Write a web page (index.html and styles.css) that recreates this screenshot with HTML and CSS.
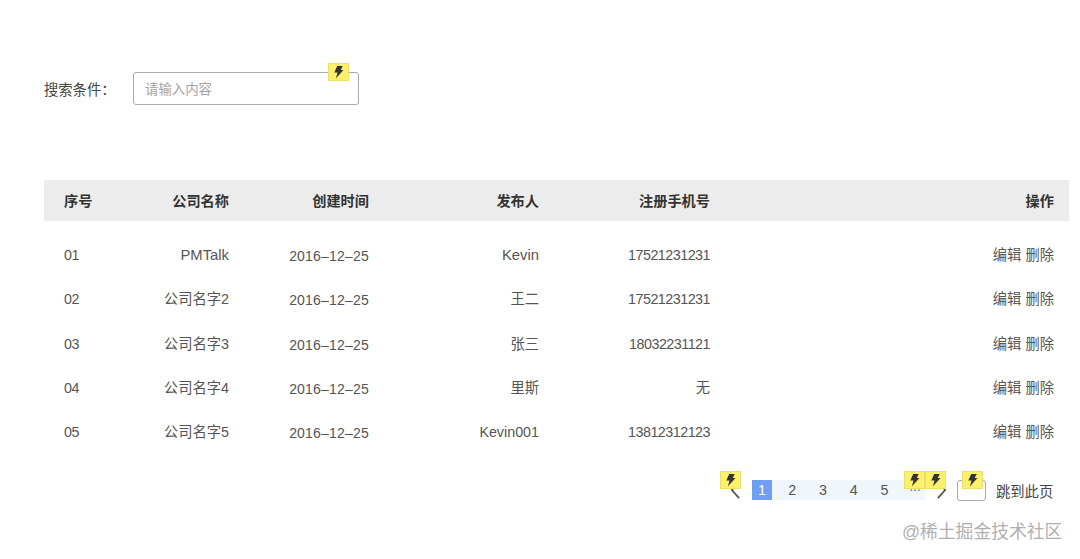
FILE: index.html
```html
<!DOCTYPE html>
<html lang="zh-CN">
<head>
<meta charset="utf-8">
<title>列表</title>
<link rel="stylesheet" href="styles.css">
</head>
<body>
<svg class="defs" width="0" height="0"><symbol id="bolt" viewBox="0 0 12 14"><path d="M4.6 0.5h6L8.4 4.8H11.5L3.2 13.7l1.7-6.2H1.4z"/></symbol></svg>
<main class="page">
  <section class="search">
    <label class="search-label">搜索条件：</label>
    <div class="search-box">
      <span class="placeholder">请输入内容</span>
      <span class="badge badge-input"><svg><use href="#bolt"/></svg></span>
    </div>
  </section>
  <section class="table">
    <div class="row head">
      <span class="left">序号</span><span>公司名称</span><span>创建时间</span><span>发布人</span><span>注册手机号</span><span>操作</span>
    </div>
    <div class="body">
      <div class="row"><span class="left num">01</span><span class="latin">PMTalk</span><span class="date">2016–12–25</span><span class="latin">Kevin</span><span class="num">17521231231</span><span>编辑 删除</span></div>
      <div class="row"><span class="left num">02</span><span>公司名字2</span><span class="date">2016–12–25</span><span>王二</span><span class="num">17521231231</span><span>编辑 删除</span></div>
      <div class="row"><span class="left num">03</span><span>公司名字3</span><span class="date">2016–12–25</span><span>张三</span><span class="num">18032231121</span><span>编辑 删除</span></div>
      <div class="row"><span class="left num">04</span><span>公司名字4</span><span class="date">2016–12–25</span><span>里斯</span><span>无</span><span>编辑 删除</span></div>
      <div class="row"><span class="left num">05</span><span>公司名字5</span><span class="date">2016–12–25</span><span>Kevin001</span><span class="num">13812312123</span><span>编辑 删除</span></div>
    </div>
  </section>
  <nav class="pager">
    <span class="arrow">
      <svg class="chev" viewBox="0 0 12 20"><path d="M10 1L2 10l8 9"/></svg>
      <span class="badge badge-prev"><svg><use href="#bolt"/></svg></span>
    </span>
    <div class="pages">
      <span class="page-no current">1</span><span class="page-no">2</span><span class="page-no">3</span><span class="page-no">4</span><span class="page-no">5</span><span class="page-no dots">...</span>
      <span class="badge badge-dots"><svg><use href="#bolt"/></svg></span>
    </div>
    <span class="arrow next">
      <svg class="chev" viewBox="0 0 12 20"><path d="M2 1l8 9-8 9"/></svg>
      <span class="badge badge-next"><svg><use href="#bolt"/></svg></span>
    </span>
    <span class="jump-box"><span class="badge badge-jump"><svg><use href="#bolt"/></svg></span></span>
    <span class="jump-text">跳到此页</span>
  </nav>
</main>
<div class="watermark">@稀土掘金技术社区</div>
</body>
</html>
```
FILE: styles.css
```css
* { box-sizing: border-box; }
html, body { margin: 0; padding: 0; }
body {
  width: 1080px;
  height: 559px;
  overflow: hidden;
  position: relative;
  background: #fff;
  color: #555;
  font-family: "Liberation Sans", "Noto Sans CJK SC", sans-serif;
  font-size: 14.3px;
}
.defs { position: absolute; }
.page { padding: 72px 0 0 44px; }
.search { display: flex; align-items: center; height: 33px; }
.search-label { width: 89px; color: #444; position: relative; top: -0.5px; }
.search-box {
  position: relative;
  width: 226px;
  height: 33px;
  padding: 5px 0 0 11px;
  border: 1px solid #aaa;
  border-radius: 3px;
}
.placeholder { color: #a3a3a3; font-size: 13.4px; }
.badge {
  position: absolute;
  display: flex;
  align-items: center;
  justify-content: center;
  width: 21px;
  height: 18px;
  background: #fdf06a;
  border: 1px solid #eadf6e;
}
.badge svg { width: 11px; height: 14px; fill: #333; }
.badge-input { top: -10px; right: 9px; }
.table { width: 1025px; margin-top: 75px; }
.row {
  display: grid;
  grid-template-columns: 65px 100px 140px 170px 171px 1fr;
  align-items: center;
  height: 44.3px;
  padding: 0 15px 0 20px;
  text-align: right;
  line-height: 20px;
}
.left { text-align: left; }
.head {
  height: 41px;
  background: #ececec;
  color: #333;
  font-weight: 700;
  font-size: 14.2px;
}
.body { padding-top: 12px; }
.num { font-size: 14.3px; letter-spacing: -0.5px; }
.latin { font-size: 14.8px; }
.date { position: relative; top: 1px; font-size: 14px; letter-spacing: 0.2px; }
.pager {
  display: flex;
  align-items: center;
  height: 20px;
  margin-top: 26px;
  padding-left: 686px;
}
.arrow { position: relative; display: flex; width: 22px; height: 20px; align-items: center; justify-content: flex-start; }
.chev { width: 11px; height: 18px; fill: none; stroke: #555; stroke-width: 2; }
.badge-prev { top: -9px; left: -10px; }
.pages {
  position: relative;
  display: flex;
  align-items: center;
  height: 20px;
  width: 173px;
  background: #f0f6fa;
}
.page-no { width: 30.7px; text-align: center; flex: none; }
.page-no.current {
  width: 20px;
  background: #6f9ef3;
  color: #fff;
  line-height: 20px;
}
.page-no.current + .page-no { margin-left: 5px; }
.dots { color: #777; line-height: 12px; align-self: flex-start; }
.badge-dots { top: -9px; right: 0; }
.next { width: 32px; justify-content: center; }
.badge-next { top: -9px; left: 0; }
.jump-box {
  position: relative;
  width: 29px;
  height: 21px;
  border: 1px solid #aaa;
  border-radius: 3px;
}
.badge-jump { top: -10px; left: 4px; }
.jump-text { margin-left: 10px; color: #444; }
.watermark {
  position: absolute;
  top: 520px;
  left: 902px;
  color: #b0b0b0;
  font-size: 17.8px;
  line-height: 24px;
  white-space: nowrap;
}
```
